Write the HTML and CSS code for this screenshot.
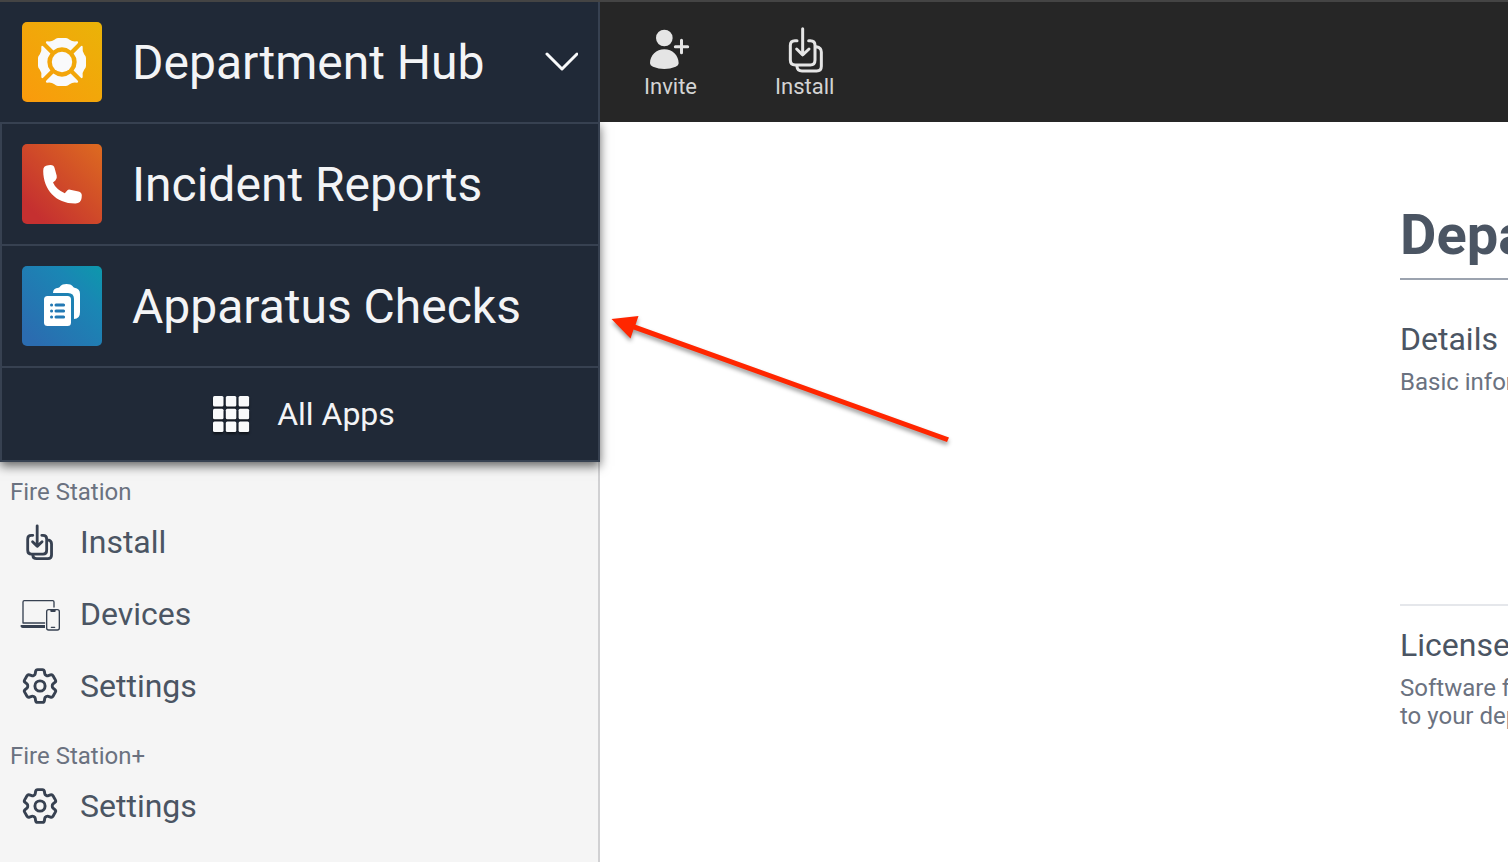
FILE: index.html
```html
<!DOCTYPE html>
<html lang="en">
<head>
<meta charset="utf-8">
<title>Department Hub</title>
<link rel="stylesheet" href="styles.css">
</head>
<body>
<svg class="sprite" aria-hidden="true">
  <symbol id="gear" viewBox="1 1 22 22">
    <path d="M9.594 3.94c.09-.542.56-.94 1.11-.94h2.593c.55 0 1.02.398 1.11.94l.213 1.281c.063.374.313.686.645.87.074.04.147.083.22.127.324.196.72.257 1.075.124l1.217-.456a1.125 1.125 0 011.37.49l1.296 2.247a1.125 1.125 0 01-.26 1.431l-1.003.827c-.293.24-.438.613-.431.992a6.759 6.759 0 010 .255c-.007.378.138.75.43.99l1.005.828c.424.35.534.954.26 1.43l-1.298 2.247a1.125 1.125 0 01-1.369.491l-1.217-.456c-.355-.133-.75-.072-1.076.124a6.57 6.57 0 01-.22.128c-.331.183-.581.495-.644.869l-.213 1.28c-.09.543-.56.941-1.11.941h-2.594c-.55 0-1.02-.398-1.11-.94l-.213-1.281c-.062-.374-.312-.686-.644-.87a6.52 6.52 0 01-.22-.127c-.325-.196-.72-.257-1.076-.124l-1.217.456a1.125 1.125 0 01-1.369-.49l-1.297-2.247a1.125 1.125 0 01.26-1.431l1.004-.827c.292-.24.437-.613.43-.992a6.932 6.932 0 010-.255c.007-.378-.138-.75-.43-.99l-1.004-.828a1.125 1.125 0 01-.26-1.43l1.297-2.247a1.125 1.125 0 011.37-.491l1.216.456c.356.133.751.072 1.076-.124.072-.044.146-.087.22-.128.332-.183.582-.495.644-.869l.214-1.281z"/>
    <circle cx="12" cy="12" r="2.8"/>
  </symbol>
</svg>

<div class="app">
  <aside class="sidebar">
    <button class="switcher" type="button" aria-expanded="true">
      <svg class="tile tile-hub" viewBox="-40 -40 80 80" aria-hidden="true">
        <g fill="#f9fafb">
          <circle r="10.200"/>
          <path id="leaf" d="M-8.600 -11.600L-15.600 -18.600Q-17 -20.600 -14.800 -20.700Q-10.500 -20 -7.600 -22.300Q-5.800 -24 -4 -24L4 -24Q5.800 -24 7.600 -22.300Q10.500 -20 14.800 -20.700Q17 -20.600 15.600 -18.600L8.600 -11.600A13.600 13.600 0 0 0 -8.600 -11.600Z"/>
          <use href="#leaf" transform="rotate(90)"/>
          <use href="#leaf" transform="rotate(180)"/>
          <use href="#leaf" transform="rotate(270)"/>
        </g>
      </svg>
      <span class="app-name">Department Hub</span>
      <svg class="chevron" viewBox="0 0 34 20" aria-hidden="true"><path d="M3 2L18 17L33 2"/></svg>
    </button>
    <div class="menu">
      <a class="menu-item" href="#incidents">
        <svg class="tile tile-incidents" viewBox="0 0 80 80" aria-hidden="true">
          <path fill="#fff" d="M21.2 27Q21 21.4 26.4 21.2L28.4 21.1Q31.8 21 32.7 24.4L34.7 31.8Q35.4 34.8 33.4 36.4L31 38.4Q33.8 45 42.8 49.2L45.2 46.4Q46.4 45.2 48.2 45.7L56.5 47.6Q59.8 48.4 59.8 51.6L59.6 54Q59 59.4 53.6 59.5C34 59.8 21.4 46 21.2 27Z"/>
        </svg>
        <span class="app-name">Incident Reports</span>
      </a>
      <a class="menu-item" href="#checks">
        <svg class="tile tile-checks" viewBox="0 0 80 80" aria-hidden="true">
          <path fill="#fff" d="M31 27Q31 22 36.500 21.800Q37.500 21.600 38.500 20Q40 18 44.500 18Q49 18 50.500 20Q51.500 21.600 52.500 21.800Q58 22.500 58 28V46Q58 53 52 53V33Q52 27 46 27Z"/>
          <rect fill="#fff" x="22" y="30" width="27" height="30" rx="3.500"/>
          <g stroke="#2379b4" stroke-width="3" stroke-linecap="round">
            <path d="M29.500 39h.1M29.500 45h.1M29.500 51h.1M34 39h7.600M34 45h7.600M34 51h7.600"/>
          </g>
        </svg>
        <span class="app-name">Apparatus Checks</span>
      </a>
      <a class="menu-item all-apps" href="#apps">
        <svg class="grid-icon" viewBox="0 0 40 40" fill="#f9fafb" aria-hidden="true">
          <rect x="2" y="2" width="10.500" height="10.500" rx="1.500"/><rect x="14.800" y="2" width="10.500" height="10.500" rx="1.500"/><rect x="27.600" y="2" width="10.500" height="10.500" rx="1.500"/>
          <rect x="2" y="14.800" width="10.500" height="10.500" rx="1.500"/><rect x="14.800" y="14.800" width="10.500" height="10.500" rx="1.500"/><rect x="27.600" y="14.800" width="10.500" height="10.500" rx="1.500"/>
          <rect x="2" y="27.600" width="10.500" height="10.500" rx="1.500"/><rect x="14.800" y="27.600" width="10.500" height="10.500" rx="1.500"/><rect x="27.600" y="27.600" width="10.500" height="10.500" rx="1.500"/>
        </svg>
        <span>All Apps</span>
      </a>
    </div>
    <nav class="nav">
      <section class="nav-group">
        <h2 class="nav-title">Fire Station</h2>
        <a class="nav-item" href="#install">
          <svg class="nav-icon nav-install" viewBox="1 -8 156 156" aria-hidden="true">
            <path d="M68 7V86M50 69L68 87L87 69M51 44H45Q31 44 31 58V102Q31 117 46 117H91Q105 117 105 102V58Q105 44 91 44H86M109 62Q124 64 124 78V121Q124 135 110 135H66Q52 135 51 122"/>
          </svg>
          <span>Install</span>
        </a>
        <a class="nav-item" href="#devices">
          <svg class="nav-icon nav-devices" viewBox="0 0 120 120" aria-hidden="true">
            <path d="M102 39V24Q102 20 98 20H13Q9 20 9 24V87H74"/>
            <path class="solid" d="M2 93H75V102H8Q2 102 2 97Z"/>
            <rect x="80" y="47" width="38" height="61" rx="6"/>
            <path class="solid" d="M91 47H107V51Q107 54 104 54H94Q91 54 91 51Z"/>
            <path d="M94 100H104"/>
          </svg>
          <span>Devices</span>
        </a>
        <a class="nav-item" href="#settings">
          <svg class="nav-icon nav-gear" aria-hidden="true"><use href="#gear"/></svg>
          <span>Settings</span>
        </a>
      </section>
      <section class="nav-group">
        <h2 class="nav-title">Fire Station+</h2>
        <a class="nav-item" href="#settings-plus">
          <svg class="nav-icon nav-gear" aria-hidden="true"><use href="#gear"/></svg>
          <span>Settings</span>
        </a>
      </section>
    </nav>
  </aside>

  <div class="page">
    <header class="toolbar">
      <button class="tool" type="button">
        <svg class="tool-icon" viewBox="2 3 144 144" aria-hidden="true">
          <g fill="#e5e5e5"><circle cx="54" cy="36" r="25"/><path d="M11 112C11 88 30 70 54 70S97 88 97 112Q97 119 88 122Q54 136 20 122Q11 119 11 112Z"/></g>
          <path d="M87 62H124M105.500 43V80" stroke="#e5e5e5" stroke-width="9" stroke-linecap="round"/>
        </svg>
        <span>Invite</span>
      </button>
      <button class="tool" type="button">
        <svg class="tool-icon" viewBox="3 3 144 144" aria-hidden="true">
          <path fill="none" stroke="#e5e5e5" stroke-width="9" stroke-linecap="round" stroke-linejoin="round" d="M68 8V86M50 69L68 87L87 69M51 44H45Q31 44 31 58V102Q31 117 46 117H91Q105 117 105 102V58Q105 44 91 44H86M109 62Q124 64 124 78V121Q124 135 110 135H66Q52 135 51 122"/>
        </svg>
        <span>Install</span>
      </button>
    </header>
    <main class="content">
      <h1 class="title">Department</h1>
      <section class="block">
        <h2 class="block-title">Details</h2>
        <p class="block-text">Basic information</p>
      </section>
      <section class="block">
        <h2 class="block-title">License</h2>
        <p class="block-text">Software features<br>to your department</p>
      </section>
    </main>
  </div>
</div>

<svg class="pointer" viewBox="0 0 350 136" aria-hidden="true">
  <path d="M5.500 7L32.500 4L29.500 12.700L343 125.500L341 130L27.500 17.500L24.500 26.500Z"/>
</svg>
</body>
</html>
```
FILE: styles.css
```css
* { box-sizing: border-box; margin: 0; }

body {
  font-family: Roboto, sans-serif;
  background: #fff;
  color: #4b5563;
}

.sprite { display: none; }

.app {
  display: flex;
  min-height: 100vh;
  border-top: 2px solid #444;
  overflow: hidden;
}

a { color: inherit; text-decoration: none; }
button { font: inherit; border: 0; cursor: pointer; }

/* Sidebar */
.sidebar {
  position: relative;
  z-index: 1;
  flex: 0 0 600px;
  min-width: 0;
  background: #f5f5f5;
  border-right: 2px solid #d1d1d3;
}

.switcher,
.menu-item {
  display: flex;
  align-items: center;
  gap: 30px;
  background: #202937;
  color: #f3f4f6;
}

.switcher,
.menu { width: calc(100% + 2px); }

.switcher {
  height: 120px;
  padding: 0 20px 0 22px;
  border-right: 2px solid #374151;
  text-align: left;
}

.app-name { flex: 1; padding-top: 2px; font-size: 48px; line-height: 56px; }

.tile { flex: none; width: 80px; height: 80px; border-radius: 5px; }
.tile-hub { background: linear-gradient(45deg, #fa9a0c, #eab308); }
.tile-incidents { background: linear-gradient(45deg, #c53030 15%, #dd6b20); }
.tile-checks { background: linear-gradient(45deg, #2b6cb0 10%, #1a86b4 70%, #0d98ac); }

.chevron {
  width: 34px;
  height: 20px;
  fill: none;
  stroke: #f9fafb;
  stroke-width: 3;
  stroke-linecap: round;
  stroke-linejoin: round;
}

.menu {
  border: 2px solid #374151;
  box-shadow: 0 4px 10px rgba(0, 0, 0, .6);
  clip-path: inset(0 -20px -20px 0);
}

.menu-item { height: 120px; padding: 0 20px; }
.menu-item + .menu-item { height: 122px; border-top: 2px solid #374151; }

.menu .all-apps {
  height: 94px;
  justify-content: center;
  gap: 26px;
  padding-left: 26px;
  font-size: 32px;
  line-height: 40px;
}

.grid-icon { width: 40px; height: 40px; filter: drop-shadow(0 2px 1px rgba(0, 0, 0, .5)); }

.nav { display: flex; flex-direction: column; gap: 20px; padding-top: 16px; }
.nav-title {
  padding-left: 10px;
  font-size: 24px;
  font-weight: 400;
  line-height: 28px;
  color: #6b7280;
}
.nav-item {
  display: flex;
  align-items: center;
  gap: 20px;
  height: 72px;
  padding-left: 20px;
  font-size: 32px;
}
.nav-icon {
  width: 40px;
  height: 40px;
  fill: none;
  stroke: #374151;
  stroke-linecap: round;
  stroke-linejoin: round;
}
.nav-install { stroke-width: 11; }
.nav-devices { stroke-width: 4; }
.nav-devices .solid { fill: #374151; stroke: none; }
.nav-gear { stroke-width: 1.6; }

/* Page */
.page { flex: 1; min-width: 0; }

.toolbar {
  display: flex;
  align-items: center;
  gap: 78px;
  height: 120px;
  padding: 2px 0 0 44px;
  background: #262626;
}
.tool {
  display: flex;
  flex-direction: column;
  align-items: center;
  padding: 0;
  background: none;
  color: #d4d4d4;
  font-size: 22px;
  line-height: 24px;
}
.tool-icon { width: 48px; height: 48px; }

.content {
  padding: 80px 0 0 800px;
  overflow: hidden;
  white-space: nowrap;
}
.title {
  height: 78px;
  border-bottom: 2px solid #9ca3af;
  font-size: 56px;
  font-weight: 700;
  line-height: 66px;
}
.block { padding-top: 38px; }
.block:first-of-type { min-height: 324px; }
.block + .block { padding-top: 18px; border-top: 2px solid #e5e7eb; }
.block-title {
  font-size: 32px;
  font-weight: 400;
  line-height: 42px;
}
.block-text {
  padding-top: 8px;
  font-size: 24px;
  line-height: 28px;
  color: #6b7280;
}

/* Callout arrow over the page */
.pointer {
  position: absolute;
  z-index: 2;
  left: 606px;
  top: 312px;
  width: 350px;
  height: 136px;
  fill: #ff2600;
  filter: drop-shadow(0 3px 2px rgba(0, 0, 0, .4));
  pointer-events: none;
}
```
